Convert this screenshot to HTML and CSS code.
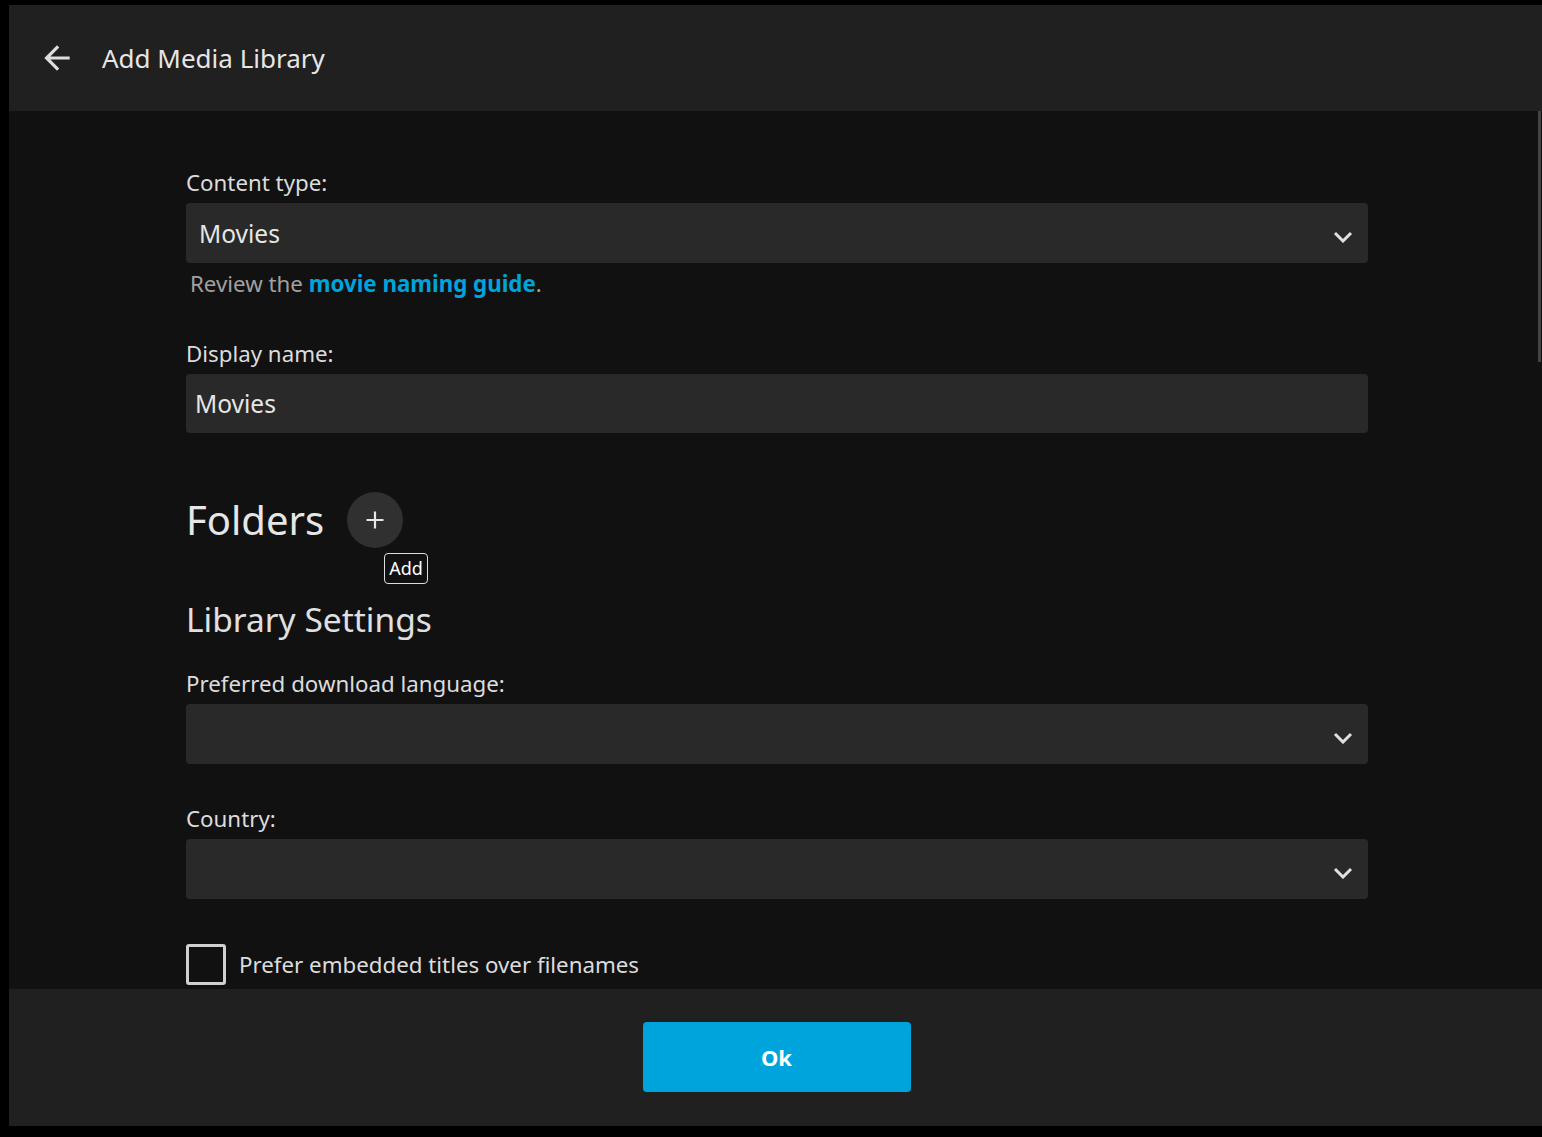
FILE: index.html
```html
<!DOCTYPE html>
<html lang="en">
<head>
    <meta charset="UTF-8">
    <meta name="viewport" content="width=device-width, initial-scale=1.0">
    <title>Add Media Library</title>
    <link rel="stylesheet" href="styles.css">
</head>
<body>
    <!-- dialog -->
    <div class="dialog">
        <div class="dialog-header">
            <button class="back-button" aria-label="Back">
                <svg width="38" height="38" viewBox="0 0 24 24"><path d="M20 11H7.83l5.59-5.59L12 4l-8 8 8 8 1.41-1.41L7.83 13H20v-2z" fill="#ddd"/></svg>
            </button>
            <h2 class="dialog-title">Add Media Library</h2>
        </div>

        <div class="dialog-content">
            <div class="form">
                <div class="field">
                    <label class="field-label">Content type:</label>
                    <div class="select-box">
                        <span class="select-value">Movies</span>
                        <svg class="chevron" width="20" height="12" viewBox="0 0 20 12"><path d="M2 2l8 8 8-8" fill="none" stroke="#e0e0e0" stroke-width="3"/></svg>
                    </div>
                    <div class="field-help">Review the <a href="#" class="link">movie naming guide</a>.</div>
                </div>

                <div class="field">
                    <label class="field-label">Display name:</label>
                    <div class="text-input">Movies</div>
                </div>

                <div class="folders-row">
                    <h1 class="section-title">Folders</h1>
                    <div class="add-wrap">
                        <button class="add-button" aria-label="Add">
                            <svg width="24" height="24" viewBox="0 0 24 24"><path d="M12 3.5v17M3.5 12h17" stroke="#e6e6e6" stroke-width="2.2"/></svg>
                        </button>
                        <span class="tooltip">Add</span>
                    </div>
                </div>

                <h2 class="sub-title">Library Settings</h2>

                <div class="field">
                    <label class="field-label">Preferred download language:</label>
                    <div class="select-box">
                        <span class="select-value"></span>
                        <svg class="chevron" width="20" height="12" viewBox="0 0 20 12"><path d="M2 2l8 8 8-8" fill="none" stroke="#e0e0e0" stroke-width="3"/></svg>
                    </div>
                </div>

                <div class="field">
                    <label class="field-label">Country:</label>
                    <div class="select-box">
                        <span class="select-value"></span>
                        <svg class="chevron" width="20" height="12" viewBox="0 0 20 12"><path d="M2 2l8 8 8-8" fill="none" stroke="#e0e0e0" stroke-width="3"/></svg>
                    </div>
                </div>

                <label class="checkbox-row">
                    <span class="checkbox"></span>
                    <span class="checkbox-label">Prefer embedded titles over filenames</span>
                </label>
            </div>
            <div class="scrollbar"></div>
        </div>

        <div class="dialog-footer">
            <button class="ok-button">Ok</button>
        </div>
    </div>
</body>
</html>
```

FILE: styles.css
```css
/* page */
body {
    margin: 0;
    background: #000;
    font-family: "Noto Sans", "Open Sans", sans-serif;
    color: #dcdcdc;
    overflow: hidden;
}

.dialog {
    display: flex;
    flex-direction: column;
    margin: 5px 0 0 9px;
    height: 1121px;
    background: #111;
}

/* header */
.dialog-header {
    display: flex;
    align-items: center;
    height: 106px;
    background: #202020;
    flex-shrink: 0;
}

.back-button {
    display: flex;
    align-items: center;
    justify-content: center;
    width: 38px;
    height: 38px;
    margin-left: 29px;
    padding: 0;
    background: none;
    border: none;
}

.dialog-title {
    margin: 0 0 0 26px;
    font-size: 26px;
    font-weight: 400;
    color: #e6e6e6;
}

/* content */
.dialog-content {
    position: relative;
    flex: 1;
    overflow: hidden;
}

.form {
    width: 1182px;
    margin-left: 177px;
    padding-top: 57px;
}

.scrollbar {
    position: absolute;
    right: 1px;
    top: 0;
    width: 3px;
    height: 251px;
    background: #444;
}

.field {
    margin-bottom: 40px;
}

.field-label {
    display: block;
    font-size: 22.3px;
    line-height: 30px;
    color: #dcdcdc;
    margin-bottom: 5px;
}

.select-box {
    display: flex;
    align-items: center;
    justify-content: space-between;
    height: 60px;
    padding: 0 15px 0 13px;
    background: #292929;
    border-radius: 4px;
    box-sizing: border-box;
}

.select-value {
    font-size: 24.5px;
    color: #e6e6e6;
}

.chevron {
    margin-top: 8px;
}

.text-input {
    display: flex;
    align-items: center;
    height: 59px;
    padding: 0 9px;
    font-size: 24.5px;
    color: #e6e6e6;
    background: #292929;
    border-radius: 4px;
}

.field-help {
    margin: 6px 0 0 4px;
    font-size: 22.3px;
    line-height: 30px;
    color: #a0a0a0;
}

.link {
    color: #00a4dc;
    font-weight: 700;
    text-decoration: none;
}

/* folders */
.folders-row {
    display: flex;
    align-items: center;
    margin-top: 59px;
}

.section-title {
    margin: 0;
    font-size: 40px;
    line-height: 54px;
    font-weight: 400;
    color: #e6e6e6;
}

.add-wrap {
    position: relative;
    margin-left: 23px;
}

.add-button {
    display: flex;
    align-items: center;
    justify-content: center;
    width: 56px;
    height: 56px;
    padding: 0;
    border: none;
    border-radius: 50%;
    background: #303030;
}

.tooltip {
    position: absolute;
    left: 37px;
    top: 61px;
    padding: 0 4px;
    font-size: 18px;
    line-height: 29px;
    color: #fff;
    background: #111;
    border: 1px solid #ddd;
    border-radius: 4px;
}

.sub-title {
    margin: 48px 0 27px;
    font-size: 33.5px;
    line-height: 46px;
    font-weight: 400;
    color: #e0e0e0;
}

/* checkbox */
.checkbox-row {
    display: flex;
    align-items: center;
    margin-top: 45px;
}

.checkbox {
    width: 34px;
    height: 35px;
    border: 3px solid #d0d0d0;
    border-radius: 3px;
}

.checkbox-label {
    margin-left: 13px;
    font-size: 22.3px;
    color: #dcdcdc;
}

/* footer */
.dialog-footer {
    display: flex;
    justify-content: center;
    align-items: flex-start;
    height: 137px;
    padding-top: 33px;
    box-sizing: border-box;
    background: #202020;
    flex-shrink: 0;
}

.ok-button {
    width: 268px;
    height: 70px;
    margin-left: 2px;
    font-family: "Noto Sans", "Open Sans", sans-serif;
    font-size: 22px;
    font-weight: 700;
    color: #fff;
    background: #00a4dc;
    border: none;
    border-radius: 4px;
}
```
